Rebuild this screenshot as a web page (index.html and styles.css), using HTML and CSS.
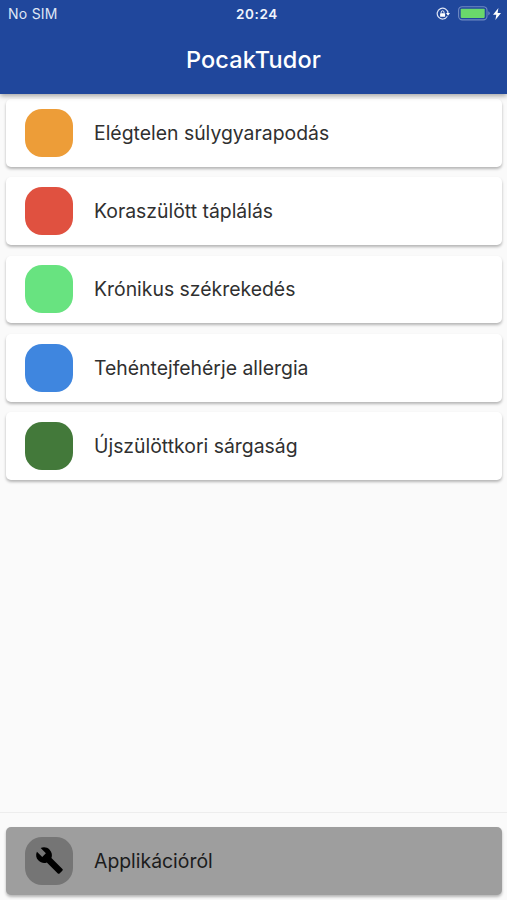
FILE: index.html
```html
<!DOCTYPE html>
<html lang="hu">
<head>
    <meta charset="UTF-8">
    <meta name="viewport" content="width=device-width, initial-scale=1.0">
    <title>PocakTudor</title>
    <link rel="stylesheet" href="styles.css">
</head>
<body>

<header class="header">
    <div class="status">
        <span class="carrier">No SIM</span>
        <span class="time">20:24</span>
        <div class="status-icons">
            <svg class="lock" width="14" height="14" viewBox="0 0 14 14">
                <path d="M11.3 9.3A5.4 5.4 0 1 1 12 6.3" fill="none" stroke="#dfe6f5" stroke-width="1.2"/>
                <path d="M10 6.1h4l-2 2.6z" fill="#fff"/>
                <rect x="4.1" y="6.2" width="5" height="3.6" rx=".5" fill="#fff"/>
                <path d="M5.2 6.4V5.2a1.4 1.4 0 0 1 2.8 0v1.2" fill="none" stroke="#fff" stroke-width=".9"/>
            </svg>
            <svg class="battery" width="32" height="15" viewBox="0 0 32 15">
                <rect x=".6" y=".7" width="28.4" height="13.2" rx="3.6" fill="none" stroke="#6f89c2" stroke-width="1.1"/>
                <rect x="2.7" y="2.7" width="24" height="9.2" rx=".8" fill="#6ad86b"/>
                <path d="M30.3 5.2q1.4.6 1.4 2.1t-1.4 2.1z" fill="#6f89c2"/>
            </svg>
            <svg class="bolt" width="8" height="12" viewBox="0 0 8 12">
                <path d="M5.4 0L0 6.7h3.3L2.4 12 8 5H4.6z" fill="#fff"/>
            </svg>
        </div>
    </div>
    <h1 class="title">PocakTudor</h1>
</header>

<main class="list">
    <div class="card"><span class="icon orange"></span>Elégtelen súlygyarapodás</div>
    <div class="card"><span class="icon red"></span>Koraszülött táplálás</div>
    <div class="card"><span class="icon green"></span>Krónikus székrekedés</div>
    <div class="card"><span class="icon blue"></span>Tehéntejfehérje allergia</div>
    <div class="card"><span class="icon dark-green"></span>Újszülöttkori sárgaság</div>
</main>

<footer class="footer">
    <div class="card about">
        <span class="icon gray">
            <svg width="29" height="29" viewBox="0 0 24 24">
                <path d="M22.7 19l-9.1-9.1c.9-2.3.4-5-1.5-6.9-2-2-5-2.4-7.4-1.3L9 6 6 9 1.6 4.7C.4 7.1.9 10.1 2.9 12.1c1.9 1.9 4.6 2.4 6.9 1.5l9.1 9.1c.4.4 1 .4 1.4 0l2.3-2.3c.5-.4.5-1.1.1-1.4z"/>
            </svg>
        </span>
        Applikációról
    </div>
</footer>

</body>
</html>
```
FILE: styles.css
```css
* {
    box-sizing: border-box;
}
body {
    display: flex;
    flex-direction: column;
    height: 100vh;
    margin: 0;
    overflow: hidden;
    font-family: Inter, Roboto, sans-serif;
    background-color: #fafafa;
}
.header {
    position: relative;
    flex: none;
    height: 94px;
    color: white;
    background-color: #20479c;
    box-shadow: 0 2px 5px rgba(0, 0, 0, 0.35);
}
.status {
    display: grid;
    grid-template-columns: 1fr auto 1fr;
    align-items: center;
    height: 27px;
    padding: 0 6px 0 8px;
    font-size: 14px;
}
.carrier {
    color: #dfe6f5;
    letter-spacing: 0.25px;
}
.time {
    padding-left: 5px;
    color: #f0f4fc;
    font-size: 13.5px;
    font-weight: 600;
    letter-spacing: 0.6px;
}
.status-icons {
    display: flex;
    align-items: center;
    justify-content: flex-end;
}
.battery {
    margin: 0 3px 0 8px;
}
.title {
    margin: 17px 0 0;
    font-size: 23.5px;
    font-weight: 500;
    line-height: 32px;
    text-align: center;
    letter-spacing: 0.15px;
}
.list {
    display: flex;
    flex: 1;
    flex-direction: column;
    gap: 10.4px;
    padding: 5.2px 5px 0 6px;
}
.card {
    display: flex;
    flex: none;
    gap: 21px;
    align-items: center;
    height: 67.8px;
    padding-left: 19px;
    color: #303030;
    font-size: 19.4px;
    border-radius: 5px;
    background-color: white;
    box-shadow: 0 2px 3px rgba(0, 0, 0, 0.28);
}
.icon {
    display: flex;
    flex: none;
    align-items: center;
    justify-content: center;
    width: 48px;
    height: 48px;
    border-radius: 17px;
}
.orange {
    background-color: #ed9d38;
}
.red {
    background-color: #e05140;
}
.green {
    background-color: #68e380;
}
.blue {
    background-color: #3f86df;
}
.dark-green {
    background-color: #43793a;
}
.gray {
    background-color: #757575;
}
.footer {
    flex: none;
    height: 88px;
    padding: 14px 5px 0 6px;
    border-top: 1px solid #ededed;
}
.about {
    color: #1c1c1c;
    background-color: #9e9e9e;
}
```
